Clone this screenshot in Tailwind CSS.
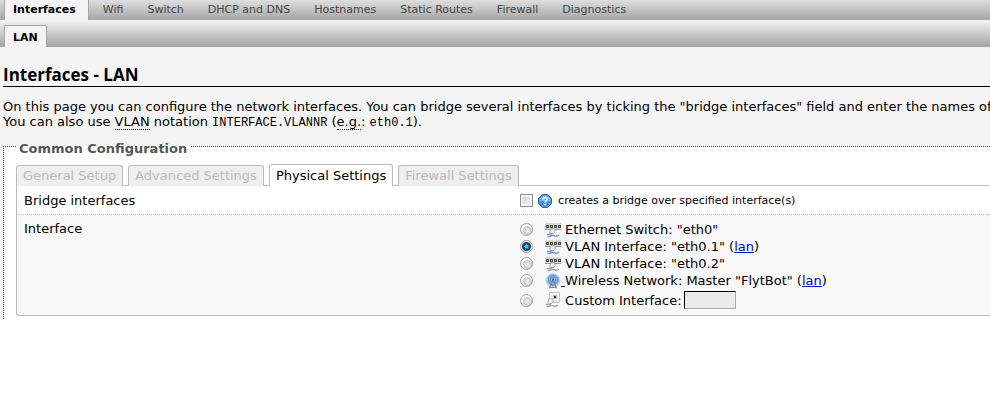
<!DOCTYPE html>
<html lang="en">
<head>
<meta charset="utf-8">
<title>Interfaces - LAN</title>
<script src="https://cdn.jsdelivr.net/npm/@tailwindcss/browser@4"></script>
</head>
<body class="overflow-x-hidden bg-white font-['Verdana','DejaVu_Sans',sans-serif] text-[13px] leading-[15px] text-black">
<svg class="hidden" aria-hidden="true">
  <symbol id="switch" viewBox="0 0 16 16">
    <path d="M0 1h16v6H0z" fill="#d8d8d2"/>
    <path d="M1 3h3v3H1zM5 3h3v3H5zM9 3h3v3H9zM13 3h3v3h-3z" fill="#484844"/>
    <path d="M2 4h1v1H2zM6 4h1v1H6zM10 4h1v1h-1zM14 4h1v1h-1z" fill="#c9bc6a"/>
    <path d="M0 7.500h16" stroke="#9c9c9c"/>
    <path d="M6 7h4v3l-2 2H5V9z" fill="#f2f5fa" stroke="#8e949c" stroke-width=".8"/>
    <path d="M2 12.500h3.500l2-1.500M2.500 14.500c2 .5 3-.5 4.500-1s3 1.500 5 .5l2-.8" fill="none" stroke="currentColor" stroke-width="1.500"/>
  </symbol>
  <symbol id="port" viewBox="0 0 16 16">
    <path d="M4.500.5h10v10h-10z" fill="#f2f2f2" stroke="#c6c6c6"/>
    <path d="M8 3h4v4H8z" fill="#bbb"/>
    <path d="M9 4h2v2H9z" fill="#333"/>
    <path d="M4 7h4v3l-2 2H3V9z" fill="#f0f0f0" stroke="#a0a0a0" stroke-width=".8"/>
    <path d="M1 12.500h3.500l2-1.500M1.500 14.500c2 .5 3-.5 4.500-1s3 1.500 5 .5l2-.8" fill="none" stroke="#aaa" stroke-width="1.500"/>
  </symbol>
  <symbol id="wifi" viewBox="0 0 16 16">
    <circle cx="8" cy="7.500" r="7" fill="#a9caee" stroke="#c3daf3"/>
    <circle cx="8" cy="7" r="5" fill="#82b0e4" stroke="#5d93d3"/>
    <circle cx="8" cy="6.500" r="2.500" fill="#cfe2f7" stroke="#4a80c4"/>
    <path d="M7.500 7 4.500 15.500M8.500 7l3 8.500M6 12h4M4.500 14.500h7M7 9.500h2" stroke="#858b92" stroke-width="1.100" fill="none"/>
    <circle cx="8" cy="6.500" r="1.300" fill="#4a6c98"/>
  </symbol>
</svg>

<div class="bg-[#f4f4f4]">
  <nav aria-label="Sections" class="flex h-5 items-stretch bg-linear-to-b from-[#dedede] to-[#a6a6a6] pl-1 text-[11px] leading-5 whitespace-nowrap text-[#444]">
    <a href="#" class="mr-[2px] border-x border-[#a6a6a6] bg-[#f4f4f4] pr-3 pl-2 font-bold text-black">Interfaces</a>
    <a href="#" class="px-3">Wifi</a>
    <a href="#" class="px-3">Switch</a>
    <a href="#" class="px-3">DHCP and DNS</a>
    <a href="#" class="px-3">Hostnames</a>
    <a href="#" class="px-3">Static Routes</a>
    <a href="#" class="px-3">Firewall</a>
    <a href="#" class="px-3">Diagnostics</a>
  </nav>
  <nav aria-label="Interfaces" class="flex h-[27px] items-end bg-linear-to-b from-[#f4f4f4] to-[#a3a3a3] pl-1 text-[11px]">
    <a href="#" class="h-[22px] border border-b-0 border-[#a6a6a6] bg-[#f4f4f4] px-2 leading-[23px] font-bold">LAN</a>
  </nav>

  <main class="pl-[3px]">
    <h1 class="border-b border-black pt-4 font-['Trebuchet_MS','Open_Sans',sans-serif] text-[17px] leading-[23px] font-bold">Interfaces - LAN</h1>
    <p class="overflow-hidden pt-3 whitespace-nowrap">On this page you can configure the network interfaces. You can bridge several interfaces by ticking the "bridge interfaces" field and enter the names of several<br>You can also use <abbr title="Virtual Local Area Network" class="border-b border-dotted border-black no-underline">VLAN</abbr> notation <code class="font-['Liberation_Mono',monospace] text-[12px]">INTERFACE.VLANNR</code> (<abbr title="for example" class="border-b border-dotted border-black no-underline">e.g.</abbr>: <code class="font-['Liberation_Mono',monospace] text-[12px]">eth0.1</code>).</p>

    <form>
      <fieldset class="mt-[6px] border-t border-l border-dotted border-[#444] bg-white pb-[3px] pl-3">
        <legend class="px-[3px] pt-1 leading-[15px] font-bold text-[#555]">Common Configuration</legend>
        <div role="tablist" class="mt-2 flex items-end gap-[5px] leading-5">
          <button type="button" role="tab" class="relative z-10 -mb-px h-[21px] rounded-t-[3px] border border-b-0 border-[#bbb] bg-[#eee] px-[6px] text-[#bbb]">General Setup</button>
          <button type="button" role="tab" class="relative z-10 -mb-px h-[21px] rounded-t-[3px] border border-b-0 border-[#bbb] bg-[#eee] px-[6px] text-[#bbb]">Advanced Settings</button>
          <button type="button" role="tab" aria-selected="true" class="relative z-10 -mb-px h-[22px] rounded-t-[3px] border border-b-0 border-[#bbb] bg-white px-[6px]">Physical Settings</button>
          <button type="button" role="tab" class="relative z-10 -mb-px h-[21px] rounded-t-[3px] border border-b-0 border-[#bbb] bg-[#eee] px-[6px] text-[#bbb]">Firewall Settings</button>
        </div>
        <div class="rounded-bl-[3px] border border-r-0 border-[#bbb]">
          <div class="grid grid-cols-[52%_1fr] border-b border-dotted border-[#bbb] pt-[7px] pr-3 pb-[6px] pl-[7px]">
            <label for="bridge">Bridge interfaces</label>
            <div class="flex items-center">
              <input id="bridge" type="checkbox" class="size-[13px] appearance-none border border-[#8e8f8f] bg-linear-to-br from-[#c8ccd2] to-[#fafafa] shadow-[inset_0_0_0_2px_#f4f4f4]">
              <svg class="ml-[5px] size-[14px]" viewBox="0 0 14 14" aria-hidden="true"><path d="M4.500.5h5l4 4v5l-4 4h-5l-4-4v-5z" fill="#4a94dc" stroke="#2f65a0"/><path d="M4.800 1.500h4.400l3.300 3.300V7h-11V4.800z" fill="#7bb6ec"/><path d="M5 5.300c0-2.500 4-2.500 4 0C9 6.700 7.200 6.500 7.200 8.500M7.200 9.700v1.500" fill="none" stroke="#fff" stroke-width="1.500"/></svg>
              <span class="ml-[6px] text-[11px]">creates a bridge over specified interface(s)</span>
            </div>
          </div>
          <div class="grid grid-cols-[52%_1fr] rounded-bl-[3px] bg-[#f8f8f8] pt-[6px] pr-3 pb-1 pl-[7px]">
            <div id="iface">Interface</div>
            <div role="radiogroup" aria-labelledby="iface" class="flex flex-col leading-[17px]">
              <label class="flex items-center"><input type="radio" name="i" class="mr-3 size-[13px] appearance-none rounded-full border border-[#a2a3a4] bg-[radial-gradient(circle_at_60%_60%,#f4f4f4,#c9ccd0_4px,#f6f6f6_5px)]"><svg class="mr-1 size-4 text-[#7d9fcc]"><use href="#switch"/></svg>Ethernet Switch: "eth0"</label>
              <label class="flex items-center"><input type="radio" name="i" checked class="mr-3 size-[13px] appearance-none rounded-full border border-[#a2a3a4] bg-[radial-gradient(circle,#50c8f0_0_1px,#0b4672_3px_4px,#f4f4f4_5px)]"><svg class="mr-1 size-4 text-[#7d9fcc]"><use href="#switch"/></svg><span>VLAN Interface: "eth0.1" (<a href="#" class="text-[#0000cc] underline">lan</a>)</span></label>
              <label class="flex items-center"><input type="radio" name="i" class="mr-3 size-[13px] appearance-none rounded-full border border-[#a2a3a4] bg-[radial-gradient(circle_at_60%_60%,#f4f4f4,#c9ccd0_4px,#f6f6f6_5px)]"><svg class="mr-1 size-4 text-[#aaa] grayscale"><use href="#switch"/></svg>VLAN Interface: "eth0.2"</label>
              <label class="flex items-center"><input type="radio" name="i" class="mr-3 size-[13px] appearance-none rounded-full border border-[#a2a3a4] bg-[radial-gradient(circle_at_60%_60%,#f4f4f4,#c9ccd0_4px,#f6f6f6_5px)]"><svg class="size-4"><use href="#wifi"/></svg><a href="#" aria-label="Wireless" class="w-1 overflow-hidden whitespace-pre text-[#0000cc] underline"> </a><span>Wireless Network: Master "FlytBot" (<a href="#" class="text-[#0000cc] underline">lan</a>)</span></label>
              <div class="flex h-[22px] items-center"><input id="custom" type="radio" name="i" class="mr-3 size-[13px] appearance-none rounded-full border border-[#a2a3a4] bg-[radial-gradient(circle_at_60%_60%,#f4f4f4,#c9ccd0_4px,#f6f6f6_5px)]"><svg class="mr-1 size-4"><use href="#port"/></svg><label for="custom">Custom Interface:</label><input type="text" aria-label="Custom interface name" class="ml-[2px] h-[18px] w-[52px] border border-t-black border-r-[#aaa] border-b-[#aaa] border-l-black bg-[#ebebeb] px-1"></div>
            </div>
          </div>
        </div>
      </fieldset>
    </form>
  </main>
</div>
</body>
</html>
